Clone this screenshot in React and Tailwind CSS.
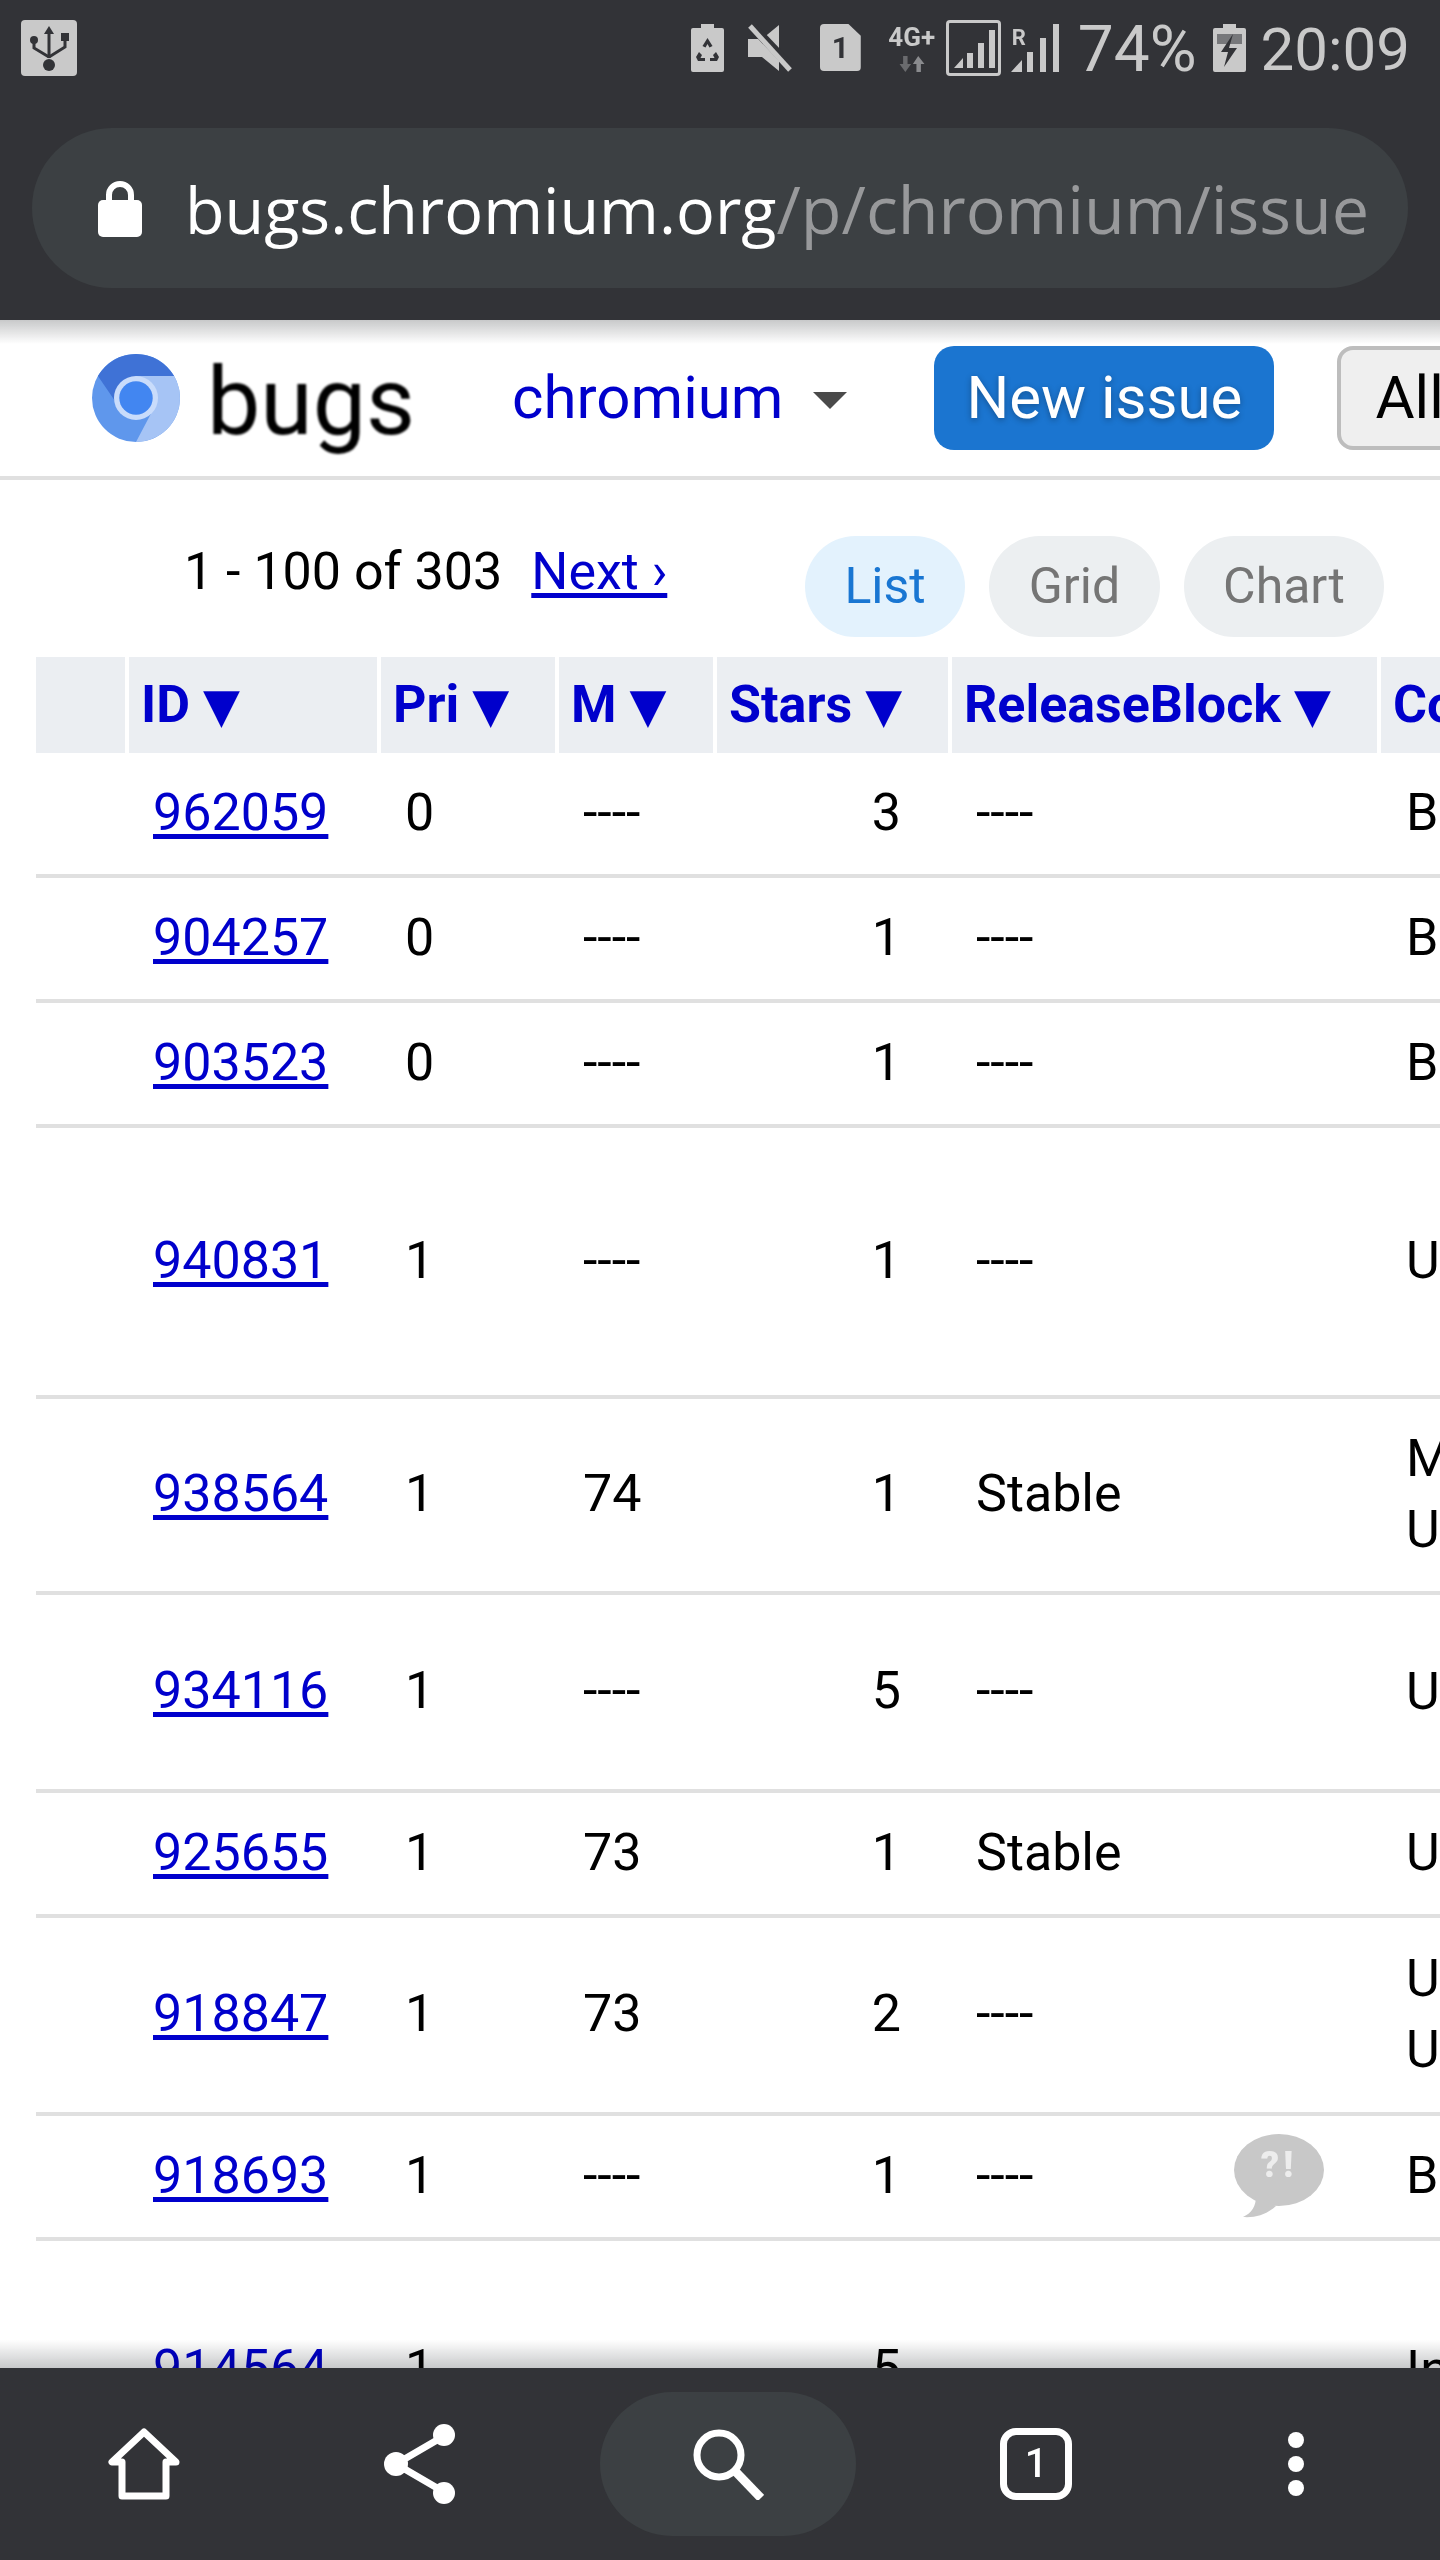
import React from "react";

const headers = [
  { label: "", cls: "w-[89px]" },
  { label: "ID", cls: "w-[248px]" },
  { label: "Pri", cls: "w-[174px]" },
  { label: "M", cls: "w-[154px]" },
  { label: "Stars", cls: "w-[231px]" },
  { label: "ReleaseBlock", cls: "w-[425px]" },
];

const rows = [
  { id: "962059", pri: "0", m: "----", stars: "3", rb: "----", comp: ["Blink>Layout"], h: "h-[125px]" },
  { id: "904257", pri: "0", m: "----", stars: "1", rb: "----", comp: ["Blink>Input"], h: "h-[125px]" },
  { id: "903523", pri: "0", m: "----", stars: "1", rb: "----", comp: ["Blink>Media"], h: "h-[125px]" },
  { id: "940831", pri: "1", m: "----", stars: "1", rb: "----", comp: ["UI>Browser"], h: "h-[271px]" },
  { id: "938564", pri: "1", m: "74", stars: "1", rb: "Stable", comp: ["Mobile>Android", "UI>Browser"], h: "h-[196px]" },
  { id: "934116", pri: "1", m: "----", stars: "5", rb: "----", comp: ["UI>Browser"], h: "h-[198px]" },
  { id: "925655", pri: "1", m: "73", stars: "1", rb: "Stable", comp: ["UI>Browser"], h: "h-[125px]" },
  { id: "918847", pri: "1", m: "73", stars: "2", rb: "----", comp: ["UI>Browser", "UI>Settings"], h: "h-[198px]" },
  { id: "918693", pri: "1", m: "----", stars: "1", rb: "----", comp: ["Blink>Forms"], h: "h-[125px]", bubble: true },
  { id: "914564", pri: "1", m: "----", stars: "5", rb: "----", comp: ["Internals>Network"], h: "h-[262px]" },
];

const UsbIcon = () => (
  <svg viewBox="0 0 56 56" className="w-[56px] h-[56px]">
    <rect width="56" height="56" rx="4" fill="#c9c9c9" />
    <path d="M28 6l-5 8h3.500v24h3V14H33z" fill="#323337" />
    <circle cx="28" cy="45" r="6" fill="#323337" />
    <rect x="40" y="13" width="8" height="8" fill="#323337" />
    <path d="M13 22v6l15 9M44 20v7l-16 10" fill="none" stroke="#323337" strokeWidth="3" />
    <circle cx="13" cy="20" r="4" fill="#323337" />
  </svg>
);

const RecycleBattery = () => (
  <svg viewBox="0 0 33 48" className="w-[33px] h-[48px]">
    <path d="M10 0h13v4h8a2 2 0 0 1 2 2v40a2 2 0 0 1-2 2H2a2 2 0 0 1-2-2V6a2 2 0 0 1 2-2h8z" fill="#c9c9c9" />
    <path d="M16.500 14l-5 8 3 1.500 2-3.500 2 3.500 3-1.500zM8 28l-3 5 2 4h7v-3H9.500l1.500-3zM25 28l3 5-2 4h-7v-3h4.500L22 31z" fill="#323337" />
  </svg>
);

const MuteIcon = () => (
  <svg viewBox="0 0 45 48" className="w-[45px] h-[48px]">
    <path d="M32 1v46L15 33H1V15h14z" fill="#c9c9c9" />
    <path d="M3 0l42 44" stroke="#323337" strokeWidth="9" />
    <path d="M3 2l40 44" stroke="#c9c9c9" strokeWidth="5" />
  </svg>
);

const SimIcon = () => (
  <div className="w-[41px] h-[47px] bg-[#c9c9c9] rounded-[4px] [clip-path:polygon(0_0,70%_0,100%_25%,100%_100%,0_100%)] flex items-center justify-center">
    <span className="font-['Roboto'] font-bold text-[30px] leading-none text-[#323337]">1</span>
  </div>
);

const SignalBox = () => (
  <div className="w-[55px] h-[56px] border-[3px] border-[#c9c9c9] rounded-[4px]">
    <svg viewBox="0 0 49 50" className="w-[49px] h-[50px]">
      <path d="M5 45l9-10v10zM18 45V30h6v15zM29 45V20h6v25zM40 45V7h6v38z" fill="#c9c9c9" />
    </svg>
  </div>
);

const RoamSignal = () => (
  <div className="relative w-[49px] h-[48px]">
    <span className="absolute left-[2px] top-[3px] font-['Roboto'] font-bold text-[22px] leading-none text-[#c9c9c9]">R</span>
    <svg viewBox="0 0 49 48" className="w-[49px] h-[48px]">
      <path d="M1 48l11-12v12zM17 48V28h6v20zM30 48V14h6v34zM43 48V0h6v48z" fill="#c9c9c9" />
    </svg>
  </div>
);

const ChargingBattery = () => (
  <svg viewBox="0 0 33 48" className="w-[33px] h-[48px]">
    <path d="M10 0h13v4h8a2 2 0 0 1 2 2v40a2 2 0 0 1-2 2H2a2 2 0 0 1-2-2V6a2 2 0 0 1 2-2h8z" fill="#c9c9c9" />
    <rect x="4" y="10" width="25" height="10" fill="#77787b" />
    <path d="M20 10L8 28h7l-4 15 13-19h-8z" fill="#323337" />
  </svg>
);

const ChromiumLogo = () => (
  <svg viewBox="0 0 100 100" className="w-[88px] h-[92px] shrink-0 blur-[0.5px]">
    <circle cx="50" cy="50" r="50" fill="#5f97ec" />
    <path d="M50 100A50 50 0 0 0 93.300 25H50L68 66z" fill="#a6c4f5" />
    <path d="M6.700 25A50 50 0 0 1 93.300 25H50L32 62z" fill="#3f72d6" />
    <circle cx="50" cy="50" r="25" fill="#c9dcfb" />
    <circle cx="50" cy="50" r="19" fill="#4286f1" />
  </svg>
);

const Bubble = () => (
  <svg viewBox="0 0 90 84" className="absolute left-[1198px] top-[18px] w-[90px] h-[84px]">
    <ellipse cx="45" cy="36" rx="45" ry="36" fill="#c8c8c8" />
    <path d="M22 62c0 10-4 17-13 21 13 1 24-3 33-11z" fill="#c8c8c8" />
    <text x="45" y="43" textAnchor="middle" fontFamily="Roboto" fontWeight="900" fontSize="36" letterSpacing="4" fill="#ededed">?!</text>
  </svg>
);

export default function App() {
  return (
    <div className="relative w-[1440px] h-[2560px] overflow-hidden bg-white flex flex-col font-['Roboto',sans-serif] text-[52px] text-black">
      <div className="h-[320px] shrink-0 bg-[#323337]">
        <div className="h-[96px] pl-[21px] pr-[30px] pt-[20px] flex items-start">
          <UsbIcon />
          <div className="ml-auto flex items-start">
            <div className="pt-[4px]"><RecycleBattery /></div>
            <div className="pt-[4px] ml-[23px]"><MuteIcon /></div>
            <div className="pt-[4px] ml-[28px]"><SimIcon /></div>
            <div className="ml-[26px] w-[50px] h-[52px] pt-[6px] flex flex-col items-center">
              <span className="font-['Roboto'] font-bold text-[26px] leading-[22px] text-[#c9c9c9] whitespace-nowrap">4G+</span>
              <svg viewBox="0 0 30 18" className="w-[30px] h-[18px] mt-[8px]">
                <path d="M5 0h5v9h4L7.500 18 1 9h4z" fill="#6a6b6e" />
                <path d="M22 0l7 9h-4v9h-5V9h-4z" fill="#8a8b8e" />
              </svg>
            </div>
            <div className="ml-[9px]"><SignalBox /></div>
            <div className="ml-[9px] pt-[4px]"><RoamSignal /></div>
            <span className="ml-[19px] mt-[-2px] font-normal text-[64px] leading-[64px] text-[#c9c9c9]">74%</span>
            <div className="ml-[16px] pt-[4px]"><ChargingBattery /></div>
            <span className="ml-[15px] mt-[-2px] font-normal text-[60px] leading-[64px] text-[#c9c9c9]">20:09</span>
          </div>
        </div>
        <div className="mx-[32px] mt-[32px] h-[160px] rounded-full bg-[#3c4043] flex items-center pl-[66px] overflow-hidden">
          <svg viewBox="0 0 44 58" className="w-[44px] h-[58px] shrink-0">
            <path d="M11 25v-9a11 11 0 0 1 22 0v9" fill="none" stroke="#fff" strokeWidth="6" />
            <rect y="21" width="44" height="37" rx="5" fill="#fff" />
          </svg>
          <span className="ml-[43px] font-['Open_Sans'] text-[64.700px] leading-none whitespace-nowrap text-white">
            bugs.chromium.org<span className="text-[66.500px] text-[#98999b]">/p/chromium/issue</span>
          </span>
        </div>
      </div>

      <div className="relative flex-1 min-h-0 overflow-hidden">
        <div className="h-[160px] border-b-4 border-[#e0e0e0] flex items-center pl-[92px] whitespace-nowrap">
          <ChromiumLogo />
          <span className="ml-[27px] font-normal text-[95px] leading-none text-black blur-[1px] pt-[6px]">bugs</span>
          <span className="ml-[97px] shrink-0 text-[60px] leading-none text-[#0000cc]">chromium</span>
          <span className="ml-[30px] mt-[4px] shrink-0 w-0 h-0 border-x-[17px] border-x-transparent border-t-[17px] border-t-[#4a4a4a]" />
          <span className="ml-[87px] shrink-0 w-[340px] h-[104px] rounded-[20px] bg-[#1b75d0] text-white text-[60px] flex items-center justify-center [text-shadow:0_2px_6px_rgba(0,0,0,0.3)]">New issue</span>
          <span className="ml-[63px] shrink-0 w-[300px] h-[104px] rounded-[16px] bg-[#efefef] border-4 border-[#bdbdbd] pl-[34px] text-[60px] flex items-center">All issues</span>
        </div>

        <div className="h-[177px] relative flex whitespace-nowrap">
          <div className="pl-[184px] pt-[62px] leading-[60px]">
            1 - 100 of 303
            <a className="ml-[29px] text-[#0000cc] underline decoration-[5px] underline-offset-[4px]">Next ›</a>
          </div>
          <div className="ml-auto pr-[56px] pt-[56px] flex gap-[24px] text-[50px]">
            <span className="w-[160px] h-[101px] rounded-full bg-[#e3f2fd] text-[#1976d2] flex items-center justify-center">List</span>
            <span className="w-[171px] h-[101px] rounded-full bg-[#eceff1] text-[#757575] flex items-center justify-center">Grid</span>
            <span className="w-[200px] h-[101px] rounded-full bg-[#eceff1] text-[#757575] flex items-center justify-center">Chart</span>
          </div>
        </div>

        <div className="ml-[36px] w-[1800px]">
          <div className="flex h-[96px] gap-[4px] font-bold text-[#0000cc] whitespace-nowrap">
            {headers.map((h, i) => (
              <div key={i} className={`${h.cls} shrink-0 bg-[#ebeef2] pl-[12px] flex items-center`}>
                {h.label && <span>{h.label} <span className="font-['DejaVu_Sans'] text-[48px]">▼</span></span>}
              </div>
            ))}
            <div className="w-[400px] shrink-0 bg-[#ebeef2] pl-[12px] flex items-center">Component</div>
          </div>
          {rows.map((r) => (
            <div key={r.id} className={`relative flex items-center pb-[2px] border-b-4 border-[#e0e0e0] ${r.h}`}>
              <div className="w-[93px] shrink-0" />
              <div className="w-[252px] shrink-0 pl-[24px]"><a className="text-[#0000cc] underline decoration-[5px] underline-offset-[4px]">{r.id}</a></div>
              <div className="w-[178px] shrink-0 pl-[24px]">{r.pri}</div>
              <div className="w-[158px] shrink-0 pl-[24px]">{r.m}</div>
              <div className="w-[235px] shrink-0 pr-[51px] text-right">{r.stars}</div>
              <div className="w-[429px] shrink-0 pl-[24px]">{r.rb}</div>
              <div className="w-[400px] shrink-0 pl-[25px] leading-[71px] whitespace-nowrap">
                {r.comp.map((c) => <div key={c}>{c}</div>)}
              </div>
              {r.bubble && <Bubble />}
            </div>
          ))}
        </div>
        <div className="absolute left-0 right-0 top-0 h-[24px] bg-gradient-to-b from-[#c8c9ca] to-transparent mix-blend-multiply" />
        <div className="absolute left-0 right-0 bottom-0 h-[28px] bg-gradient-to-t from-[#c8c9ca] to-transparent mix-blend-multiply" />
      </div>

      <div className="h-[192px] shrink-0 bg-[#323337] flex items-center">
        <svg viewBox="0 0 72 72" className="ml-[108px] w-[72px] h-[72px] shrink-0">
          <path d="M36 4L4 34h10v34h44V34h10z" fill="none" stroke="#fff" strokeWidth="7" strokeLinejoin="round" />
        </svg>
        <svg viewBox="0 0 72 80" className="ml-[204px] w-[72px] h-[80px] shrink-0">
          <path d="M60 12L12 40l48 28" fill="none" stroke="#fff" strokeWidth="7" />
          <circle cx="60" cy="11" r="11" fill="#fff" />
          <circle cx="12" cy="40" r="12" fill="#fff" />
          <circle cx="60" cy="69" r="11" fill="#fff" />
        </svg>
        <div className="ml-[144px] w-[256px] h-[144px] rounded-[72px] bg-[#3c4043] flex items-center justify-center shrink-0">
          <svg viewBox="0 0 72 72" className="w-[72px] h-[72px]">
            <circle cx="27" cy="27" r="22" fill="none" stroke="#fff" strokeWidth="7" />
            <path d="M43 43l26 27" stroke="#fff" strokeWidth="9" />
          </svg>
        </div>
        <div className="ml-[144px] w-[72px] h-[72px] shrink-0 rounded-[16px] border-[7px] border-white flex items-center justify-center text-white font-medium text-[40px] leading-none">1</div>
        <div className="ml-[216px] w-[16px] flex flex-col gap-[8px] shrink-0">
          <span className="w-[16px] h-[16px] rounded-full bg-white" />
          <span className="w-[16px] h-[16px] rounded-full bg-white" />
          <span className="w-[16px] h-[16px] rounded-full bg-white" />
        </div>
      </div>
    </div>
  );
}
